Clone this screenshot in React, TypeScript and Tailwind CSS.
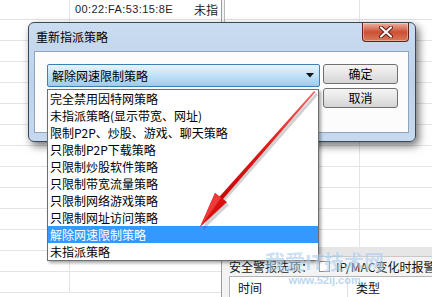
import React from 'react';

const items = [
  '完全禁用因特网策略',
  '未指派策略(显示带宽、网址)',
  '限制P2P、炒股、游戏、聊天策略',
  '只限制P2P下载策略',
  '只限制炒股软件策略',
  '只限制带宽流量策略',
  '只限制网络游戏策略',
  '只限制网址访问策略',
  '解除网速限制策略',
  '未指派策略',
];

const selected = 8;

// background table rows: first row cut off at the top, the rest 21px
const leftRows = [20, 21, 21, 21, 21, 21, 21, 21, 21, 21, 21, 21, 21, 21];
const rightRows = [20, 21, 21, 21, 21, 21, 21, 21, 21, 21, 21, 21];

function BackgroundTable() {
  return (
    <div className="flex h-full">
      {/* left part of the host list */}
      <div className="w-[221px] flex flex-col">
        {leftRows.map((h, i) => (
          <div
            key={i}
            style={{ height: h }}
            className="flex shrink-0 border-b border-[#e4e4e4]"
          >
            <div className="w-[70px] border-r border-[#e4e4e4]" />
            <div className="flex-1 flex items-center whitespace-nowrap">
              {i === 0 && (
                <>
                  <span className="ml-[5px] w-[119px] font-['Liberation_Sans',sans-serif] text-[11px] tracking-[0.4px] text-[#222]">
                    00:22:FA:53:15:8E
                  </span>
                  <span className="text-[12px] text-[#222]">未指</span>
                </>
              )}
            </div>
          </div>
        ))}
      </div>

      {/* right part */}
      <div className="flex-1 min-w-0 flex flex-col border-l border-[#9c9c9c]">
        <div className="h-[247px] overflow-hidden border-l-2 border-[#f4f4f4]">
          <div className="border-l border-[#b8b8b8] h-full">
            {rightRows.map((h, i) => (
              <div
                key={i}
                style={{ height: h }}
                className="flex border-b border-[#e4e4e4]"
              >
                <div className="w-[135px] border-r border-[#e4e4e4]" />
                <div className="flex-1" />
              </div>
            ))}
          </div>
        </div>
        <div className="h-[10px] bg-[#e6e6e6] border-b border-[#c8c8c8]" />
        <div className="flex-1 bg-[#f3f3f3] pl-[7px] flex flex-col overflow-hidden">
          <div className="h-[23px] flex items-center text-[12px] text-[#111] whitespace-nowrap">
            <span>安全警报选项：</span>
            <span className="ml-[6px] w-[11px] h-[11px] shrink-0 border border-[#8e8e8e] bg-white" />
            <span className="ml-[6px]">IP/MAC变化时报警</span>
          </div>
          <div className="flex-1 bg-white border-t border-l border-[#b5b5b5] flex text-[12px] text-[#111]">
            <div className="w-[118px] pl-[8px] pt-[2px] border-r border-[#e0e0e0]">时间</div>
            <div className="pl-[8px] pt-[2px]">类型</div>
          </div>
        </div>
      </div>
    </div>
  );
}

function CloseButton() {
  return (
    <div className="w-[47px] h-[19px] rounded-b-[4px] border border-t-0 border-[#5e2418] bg-gradient-to-b from-[#eab0a2] via-[#cc4f33] to-[#d87a5c] shadow-[inset_0_0_0_1px_rgba(255,255,255,0.35)] flex items-center justify-center">
      <svg width="14" height="12" viewBox="0 0 14 12">
        <path d="M2 1.5 L12 10.5 M12 1.5 L2 10.5" stroke="#5a1a10" strokeWidth="4" strokeLinecap="round" />
        <path d="M2 1.5 L12 10.5 M12 1.5 L2 10.5" stroke="#ffffff" strokeWidth="2.2" strokeLinecap="round" />
      </svg>
    </div>
  );
}

function Dialog() {
  return (
    <div className="absolute left-[28px] top-[22px] w-[388px] h-[120px] rounded-[6px] border border-[#3a4859] bg-gradient-to-b from-[#c9dcf0] via-[#bed3ea] to-[#c6d9ee] shadow-[3px_4px_8px_rgba(0,0,0,0.55)] flex flex-col">
      <div className="h-[28px] flex justify-between">
        <span className="pl-[7px] pt-[6px] text-[12px] leading-[16px] text-black">重新指派策略</span>
        <div className="mr-[6px]">
          <CloseButton />
        </div>
      </div>
      <div className="ml-[5px] mr-[6px] h-[82px] border border-[#8fa4bf] bg-[#fcfcfc] pl-[12px] pt-[12px] flex gap-[3px]">
        <div className="w-[273px] h-[23px] rounded-[2px] border border-[#3c7fb1] bg-gradient-to-b from-[#e6f3fd] via-[#c2e1f8] to-[#9ccbef] flex items-center justify-between pl-[4px] pr-[5px]">
          <span className="text-[12px] leading-[16px] text-black">解除网速限制策略</span>
          <svg width="8" height="5" viewBox="0 0 8 5">
            <path d="M0 0 H8 L4 4.5 Z" fill="#111" />
          </svg>
        </div>
        <div className="flex flex-col gap-[4px]">
          <button className="w-[75px] h-[20px] rounded-[3px] border border-[#707070] bg-gradient-to-b from-[#f4f4f4] via-[#e6e6e6] to-[#d4d4d4] text-[12px] leading-[16px] text-black">
            确定
          </button>
          <button className="w-[75px] h-[20px] rounded-[3px] border border-[#707070] bg-gradient-to-b from-[#f4f4f4] via-[#e6e6e6] to-[#d4d4d4] text-[12px] leading-[16px] text-black">
            取消
          </button>
        </div>
      </div>
    </div>
  );
}

function DropList() {
  return (
    <div className="absolute left-[47px] top-[89px] w-[272px] border border-[#6e6e6e] bg-white shadow-[2px_2px_3px_rgba(0,0,0,0.35)]">
      {items.map((t, i) => (
        <div
          key={t}
          className={
            i === selected
              ? 'h-[17px] pl-[2px] text-[12px] leading-[17px] bg-[#3399ff] text-white'
              : 'h-[17px] pl-[2px] text-[12px] leading-[17px] text-black'
          }
        >
          {t}
        </div>
      ))}
    </div>
  );
}

function RedArrow() {
  return (
    <svg className="absolute left-0 top-0 pointer-events-none" width="432" height="297" viewBox="0 0 432 297">
      <defs>
        <linearGradient id="shaft" x1="1" y1="0" x2="0" y2="1">
          <stop offset="0" stopColor="#f26a6a" />
          <stop offset="0.5" stopColor="#e01a1a" />
          <stop offset="1" stopColor="#c80808" />
        </linearGradient>
      </defs>
      {/* soft shadow */}
      <polygon
        points="316,93 318,95 225,201 229,205 203,230 215,195 221,199"
        fill="rgba(0,0,0,0.18)"
      />
      <polygon points="314,91 315.5,92 222.6,199.5 219.4,196.8" fill="url(#shaft)" />
      <polygon points="200,227 215,193 227,202" fill="#d81010" />
      <polygon points="200,227 215,193 221,198" fill="#f03a3a" />
    </svg>
  );
}

export default function App() {
  return (
    <div className="relative w-[432px] h-[297px] overflow-hidden bg-white font-['Noto_Sans_CJK_SC','Noto_Sans',sans-serif] text-[12px] text-black">
      <BackgroundTable />
      <Dialog />
      <DropList />
      <RedArrow />
      {/* site watermark */}
      <div className="absolute left-[265px] top-[250px] flex flex-col items-center pointer-events-none opacity-60">
        <span className="text-[20px] leading-[24px] font-bold text-[#a9cdf0] [text-shadow:0_0_2px_#ffffff]">
          我爱IT技术网
        </span>
        <span className="font-['Liberation_Sans',sans-serif] text-[11px] leading-[12px] font-bold text-[#8fbde8]">
          www.52ij.com
        </span>
      </div>
    </div>
  );
}
